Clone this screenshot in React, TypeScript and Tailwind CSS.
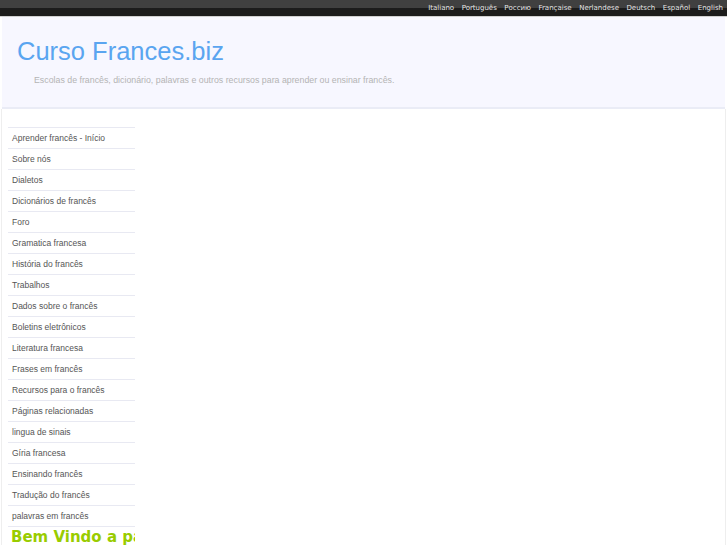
const langs = ["Italiano", "Português", "Россию", "Française", "Nerlandese", "Deutsch", "Español", "English"]

const menu = [
    "Aprender francês - Início",
    "Sobre nós",
    "Dialetos",
    "Dicionários de francês",
    "Foro",
    "Gramatica francesa",
    "História do francês",
    "Trabalhos",
    "Dados sobre o francês",
    "Boletins eletrônicos",
    "Literatura francesa",
    "Frases em francês",
    "Recursos para o francês",
    "Páginas relacionadas",
    "lingua de sinais",
    "Gíria francesa",
    "Ensinando francês",
    "Tradução do francês",
    "palavras em francês",
]

export default function App() {
    return (
        <div className="w-[727px] h-[545px] overflow-hidden bg-white" style={{ fontFamily: '"Liberation Sans", Arial, sans-serif' }}>
            <div className="h-[17px] bg-gradient-to-b from-[#404040] from-50% to-[#1c1c1c] to-50% border-b border-[#d0d0d0] flex justify-end items-center pr-[4px] gap-[7.5px] text-[7px] text-[#e6e6e6]" style={{ fontFamily: '"DejaVu Sans", sans-serif' }}>
                {langs.map((l) => (
                    <span key={l} className="pt-[1px]">{l}</span>
                ))}
            </div>
            <div className="mx-[2px] h-[92px] bg-[#f7f7ff] border-b-2 border-[#eaecf6] pt-[19px]">
                <h1 className="ml-[15px] text-[25.5px] leading-[30px] text-[#5aa5f0]">Curso Frances.biz</h1>
                <p className="ml-[32px] mt-[8px] text-[8.8px] text-[#b4b4b4]">Escolas de francês, dicionário, palavras e outros recursos para aprender ou ensinar francês.</p>
            </div>
            <div className="flex border-l border-r border-[#eeeeee] mx-[1px] h-[440px]">
                <div className="ml-[6px] mt-[18px] w-[127px] overflow-hidden">
                    <ul>
                        {menu.map((m) => (
                            <li key={m} className="h-[21px] border-t border-[#e8e9f2] pl-[4px] flex items-center text-[8.5px] text-[#555555]">{m}</li>
                        ))}
                    </ul>
                    <div className="border-t border-[#e8e9f2] pl-[3px] whitespace-nowrap text-[15px] leading-[20px] font-bold text-[#99cc00]" style={{ fontFamily: '"DejaVu Sans", sans-serif' }}>Bem Vindo a página</div>
                </div>
                <div className="flex-1" />
            </div>
        </div>
    )
}
